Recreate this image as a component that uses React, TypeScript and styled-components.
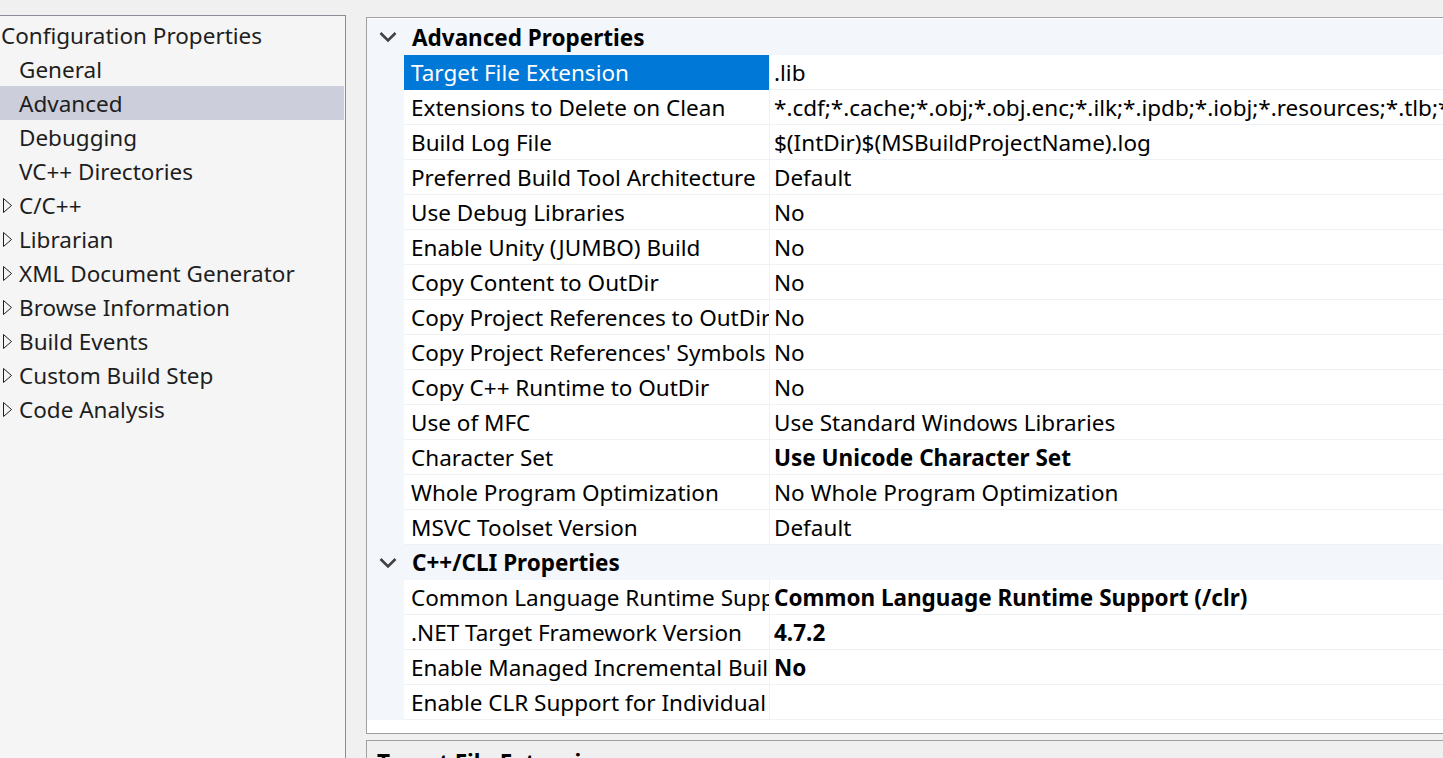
import React from "react";
import styled, { createGlobalStyle } from "styled-components";

const Global = createGlobalStyle`
  html, body { margin: 0; padding: 0; }
  body {
    background: #f0f0f0;
    font-family: "Noto Sans", "Open Sans", sans-serif;
    overflow: hidden;
  }
`;

const FONT_SIZE = 22.5;

const Page = styled.div`
  display: flex;
  width: 1443px;
  height: 758px;
  padding-top: 15px;
  box-sizing: border-box;
  overflow: hidden;
  background: #f0f0f0;
  font-size: ${FONT_SIZE}px;
`;

const TreePanel = styled.div`
  flex: 0 0 346px;
  box-sizing: border-box;
  background: #f5f5f5;
  border-top: 1px solid #8c8c96;
  border-right: 1px solid #8c8c96;
  padding-top: 2px;
  display: flex;
  flex-direction: column;
`;

const TreeItem = styled.div<{ $selected?: boolean; $level: number }>`
  height: 34px;
  display: flex;
  align-items: center;
  position: relative;
  padding-left: ${(p) => (p.$level === 0 ? 1 : 19)}px;
  background: ${(p) => (p.$selected ? "#cccedb" : "transparent")};
  color: #1e1e1e;
  white-space: nowrap;
  margin-right: 1px;
`;

const Expander = styled.svg`
  position: absolute;
  left: 3px;
  top: 10px;
`;

const RightColumn = styled.div`
  flex: 0 0 auto;
  margin-left: 20px;
  padding-top: 2px;
  display: flex;
  flex-direction: column;
  width: 1200px;
`;

const Grid = styled.div`
  border: 1px solid #a0a0a0;
  background: #ffffff;
  padding-top: 1px;
  padding-bottom: 13px;
  display: flex;
  flex-direction: column;
`;

const GroupHeader = styled.div<{ $first?: boolean }>`
  height: ${(p) => (p.$first ? 36 : 35)}px;
  display: flex;
  align-items: center;
  background: #f3f6fb;
  font-weight: 700;
  color: #000;
`;

const GroupTitle = styled.span`
  margin-left: 8px;
`;

const Chevron = styled.svg`
  width: 37px;
  flex: 0 0 37px;
`;

const Row = styled.div`
  height: 35px;
  display: flex;
  background: #f3f6fb;
`;

const NameCell = styled.div<{ $selected?: boolean }>`
  margin-left: 37px;
  width: 365px;
  box-sizing: border-box;
  padding-left: 7px;
  display: flex;
  align-items: center;
  white-space: nowrap;
  overflow: hidden;
  background: ${(p) => (p.$selected ? "#0078d7" : "#ffffff")};
  color: ${(p) => (p.$selected ? "#ffffff" : "#000000")};
  border-bottom: 1px solid ${(p) => (p.$selected ? "#0078d7" : "#eef1f5")};
`;

const ValueCell = styled.div<{ $bold?: boolean }>`
  flex: 1;
  box-sizing: border-box;
  padding-left: 4px;
  display: flex;
  align-items: center;
  white-space: nowrap;
  overflow: hidden;
  background: #ffffff;
  border-left: 1px solid #eef1f5;
  border-bottom: 1px solid #eef1f5;
  font-weight: ${(p) => (p.$bold ? 700 : 400)};
  color: #000;
`;

const Description = styled.div`
  margin-top: 6px;
  border: 1px solid #a0a0a0;
  background: #f0f0f0;
  padding: 6px 0 0 10px;
  font-weight: 700;
  height: 60px;
  white-space: nowrap;
`;

const tree: { label: string; level: number; expandable?: boolean; selected?: boolean }[] = [
  { label: "Configuration Properties", level: 0 },
  { label: "General", level: 1 },
  { label: "Advanced", level: 1, selected: true },
  { label: "Debugging", level: 1 },
  { label: "VC++ Directories", level: 1 },
  { label: "C/C++", level: 1, expandable: true },
  { label: "Librarian", level: 1, expandable: true },
  { label: "XML Document Generator", level: 1, expandable: true },
  { label: "Browse Information", level: 1, expandable: true },
  { label: "Build Events", level: 1, expandable: true },
  { label: "Custom Build Step", level: 1, expandable: true },
  { label: "Code Analysis", level: 1, expandable: true },
];

type Prop = { name: string; value: string; bold?: boolean; selected?: boolean };

const groups: { title: string; rows: Prop[] }[] = [
  {
    title: "Advanced Properties",
    rows: [
      { name: "Target File Extension", value: ".lib", selected: true },
      {
        name: "Extensions to Delete on Clean",
        value: "*.cdf;*.cache;*.obj;*.obj.enc;*.ilk;*.ipdb;*.iobj;*.resources;*.tlb;*.tli;*.tlh;*.tmp;*.rsp;*.pgc;*.pgd;*.meta",
      },
      { name: "Build Log File", value: "$(IntDir)$(MSBuildProjectName).log" },
      { name: "Preferred Build Tool Architecture", value: "Default" },
      { name: "Use Debug Libraries", value: "No" },
      { name: "Enable Unity (JUMBO) Build", value: "No" },
      { name: "Copy Content to OutDir", value: "No" },
      { name: "Copy Project References to OutDir", value: "No" },
      { name: "Copy Project References' Symbols to OutDir", value: "No" },
      { name: "Copy C++ Runtime to OutDir", value: "No" },
      { name: "Use of MFC", value: "Use Standard Windows Libraries" },
      { name: "Character Set", value: "Use Unicode Character Set", bold: true },
      { name: "Whole Program Optimization", value: "No Whole Program Optimization" },
      { name: "MSVC Toolset Version", value: "Default" },
    ],
  },
  {
    title: "C++/CLI Properties",
    rows: [
      {
        name: "Common Language Runtime Support",
        value: "Common Language Runtime Support (/clr)",
        bold: true,
      },
      { name: ".NET Target Framework Version", value: "4.7.2", bold: true },
      { name: "Enable Managed Incremental Build", value: "No", bold: true },
      { name: "Enable CLR Support for Individual Files", value: "" },
    ],
  },
];

export default function App() {
  return (
    <>
      <Global />
      <Page>
        <TreePanel>
          {tree.map((t) => (
            <TreeItem key={t.label} $level={t.level} $selected={t.selected}>
              {t.expandable && (
                <Expander width="10" height="16" viewBox="0 0 10 16">
                  <polygon points="0.5,0.5 8.5,7.5 0.5,14.5" fill="none" stroke="#1e1e1e" strokeWidth="1" />
                </Expander>
              )}
              {t.label}
            </TreeItem>
          ))}
        </TreePanel>
        <RightColumn>
          <Grid>
            {groups.map((g, gi) => (
              <React.Fragment key={g.title}>
                <GroupHeader $first={gi === 0}>
                  <Chevron height="14" viewBox="0 0 37 14">
                    <polyline points="13.5,3 21,10.5 28.5,3" fill="none" stroke="#424242" strokeWidth="2.6" />
                  </Chevron>
                  <GroupTitle>{g.title}</GroupTitle>
                </GroupHeader>
                {g.rows.map((r) => (
                  <Row key={r.name}>
                    <NameCell $selected={r.selected}>{r.name}</NameCell>
                    <ValueCell $bold={r.bold}>{r.value}</ValueCell>
                  </Row>
                ))}
              </React.Fragment>
            ))}
          </Grid>
          <Description>Target File Extension</Description>
        </RightColumn>
      </Page>
    </>
  );
}
